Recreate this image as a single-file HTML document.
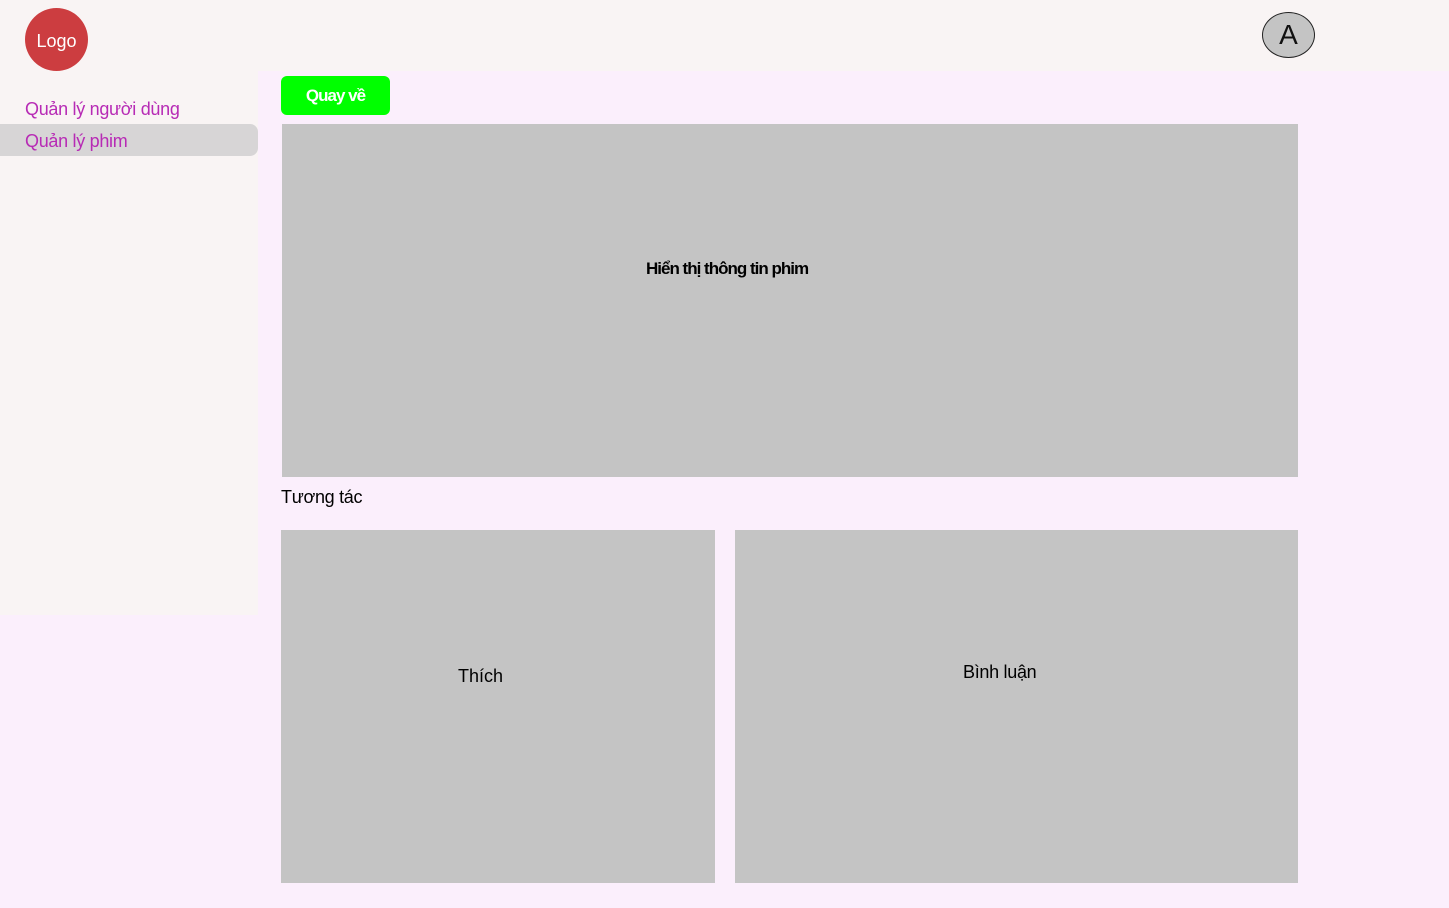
<!DOCTYPE html>
<html><head><meta charset="utf-8"><style>
*{margin:0;padding:0;box-sizing:border-box}
body{width:1449px;height:908px;background:#fbeffc;font-family:"Liberation Sans",sans-serif;position:relative;overflow:hidden}
.hdr{position:absolute;left:0;top:0;width:1449px;height:71px;background:#f9f4f4}
.side{position:absolute;left:0;top:71px;width:258px;height:544px;background:#f9f4f4}
.logo{position:absolute;left:25px;top:10px;width:63px;height:63px;border-radius:50%;color:#fff;font-size:18px;display:flex;align-items:center;justify-content:center}
.logobg{position:absolute;left:25px;top:8px;width:63px;height:63px;border-radius:50%;background:#cc3d40}
.av{position:absolute;left:1262px;top:12px;width:53px;height:46px;border-radius:50%;background:#c4c4c4;border:1px solid #222;font-size:28px;display:flex;align-items:center;justify-content:center;color:#111}
.nav{position:absolute;left:25px;color:#b72bb5;font-size:18px;letter-spacing:-0.3px}
.sel{position:absolute;left:0;top:124px;width:258px;height:32px;background:#d7d5d6;border-radius:0 8px 8px 0}
.btn{position:absolute;left:281px;top:76px;width:109px;height:39px;background:#00ff00;border-radius:6px;color:#fff;font-weight:bold;font-size:17px;display:flex;align-items:center;justify-content:center;letter-spacing:-1px}
.box{position:absolute;background:#c4c4c4;color:#000;font-size:18px}
.box span{position:absolute}
</style></head><body>
<div class="hdr"></div><div class="side"></div>
<div class="logobg"></div><div class="logo">Logo</div>
<div class="av">A</div>
<div class="sel"></div>
<div class="nav" style="top:99px">Quản lý người dùng</div>
<div class="nav" style="top:131px">Quản lý phim</div>
<div class="btn">Quay về</div>
<div class="box" style="left:282px;top:124px;width:1016px;height:353px"><span style="left:364px;top:135px;font-weight:bold;font-size:17px;letter-spacing:-1px">Hiển thị thông tin phim</span></div>
<div style="position:absolute;left:281px;top:487px;font-size:18px;letter-spacing:-0.3px">Tương tác</div>
<div class="box" style="left:281px;top:530px;width:434px;height:353px"><span style="left:177px;top:136px">Thích</span></div>
<div class="box" style="left:735px;top:530px;width:563px;height:353px"><span style="left:228px;top:132px;letter-spacing:-0.3px">Bình luận</span></div>
</body></html>
